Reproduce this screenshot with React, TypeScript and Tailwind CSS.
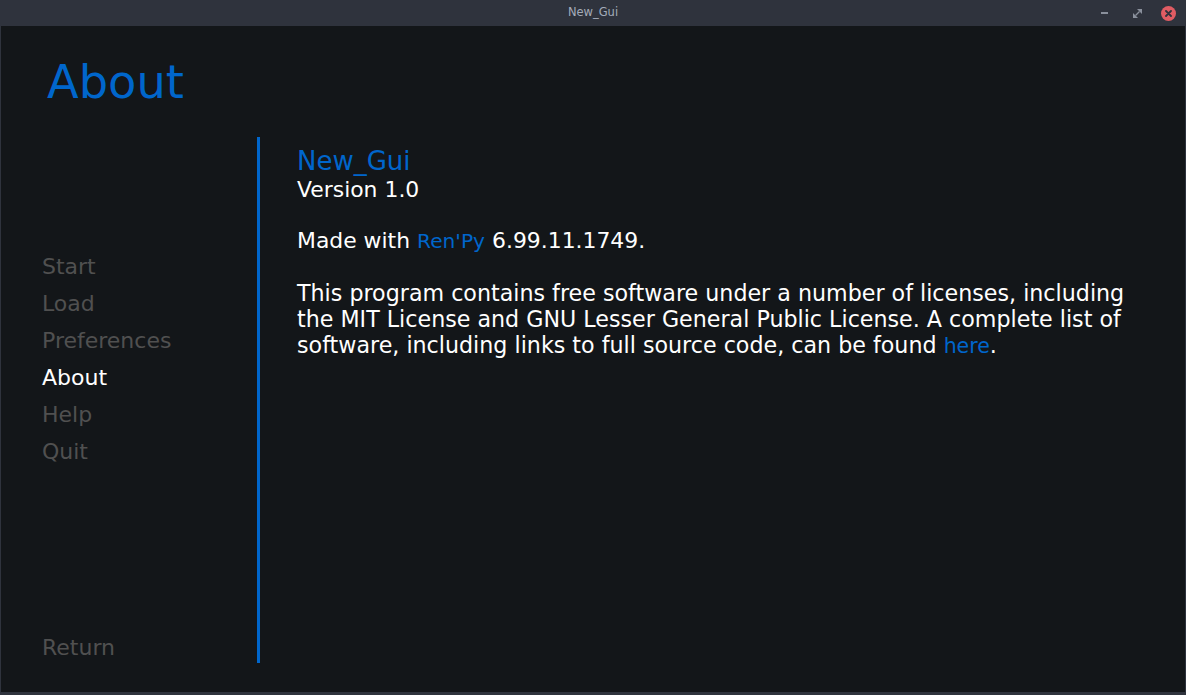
import React from 'react';

const navItems = ['Start', 'Load', 'Preferences', 'About', 'Help', 'Quit'];

function TitleBar() {
  return (
    <div className="relative h-[26px] shrink-0 flex items-center justify-center bg-[#2f333d]">
      <span className="text-[11.5px] text-[#a3abb9]">New_Gui</span>
      <div className="absolute right-0 top-0 h-[26px] flex items-center">
        {/* minimize */}
        <div className="w-[7px] h-[2px] bg-[#8a909c] mr-[25px]" />
        {/* restore */}
        <svg width="9" height="9" viewBox="0 0 9 9" className="mr-[19px]">
          <path d="M4 0H9V5Z" fill="#8a909c" />
          <path d="M0 4V9H5Z" fill="#8a909c" />
          <path d="M2.5 6.5L6.5 2.5" stroke="#8a909c" strokeWidth="1.2" />
        </svg>
        {/* close */}
        <div className="w-[15px] h-[15px] rounded-full bg-[#e05c63] flex items-center justify-center mr-[10px]">
          <svg width="7" height="7" viewBox="0 0 7 7">
            <path d="M1 1L6 6M6 1L1 6" stroke="#2f333d" strokeWidth="1.8" strokeLinecap="round" />
          </svg>
        </div>
      </div>
    </div>
  );
}

export default function App() {
  return (
    <div
      className="w-[1186px] h-[695px] flex flex-col bg-[#2f333d] overflow-hidden"
      style={{ fontFamily: '"DejaVu Sans", sans-serif' }}
    >
      <TitleBar />
      <div className="flex-1 mx-[1px] mb-[3px] bg-[#131619] flex flex-col">
        <h1 className="pl-[46px] pt-[33px] text-[46.3px] leading-[46px] text-[#0066cc]">About</h1>

        <div className="flex flex-1 mt-[32px]">
          {/* navigation */}
          <div className="w-[256px] pl-[41px] pt-[111px] pb-[26px] flex flex-col text-[22px] leading-[37px]">
            {navItems.map(item => (
              <span key={item} className={item === 'About' ? 'text-white' : 'text-[#505050]'}>
                {item}
              </span>
            ))}
            <span className="mt-auto text-[#505050]">Return</span>
          </div>

          <div className="w-[3px] h-[526px] bg-[#0066cc]" />

          {/* content */}
          <div className="pl-[37px] pt-[10px] text-white text-[21.9px]">
            <div className="text-[26px] leading-[28px] text-[#0066cc]">New_Gui</div>
            <div className="leading-[28px] mt-[1px]">Version 1.0</div>
            <p className="mt-[24px] leading-[26px]">
              Made with <span className="text-[20.2px] text-[#0066cc]">Ren'Py</span> 6.99.11.1749.
            </p>
            <p className="mt-[26px] leading-[26px] whitespace-nowrap text-[22.2px]">
              This program contains free software under a number of licenses, including
              <br />
              the MIT License and GNU Lesser General Public License. A complete list of
              <br />
              software, including links to full source code, can be found{' '}
              <span className="text-[20.5px] text-[#0066cc]">here</span>.
            </p>
          </div>
        </div>
      </div>
    </div>
  );
}
